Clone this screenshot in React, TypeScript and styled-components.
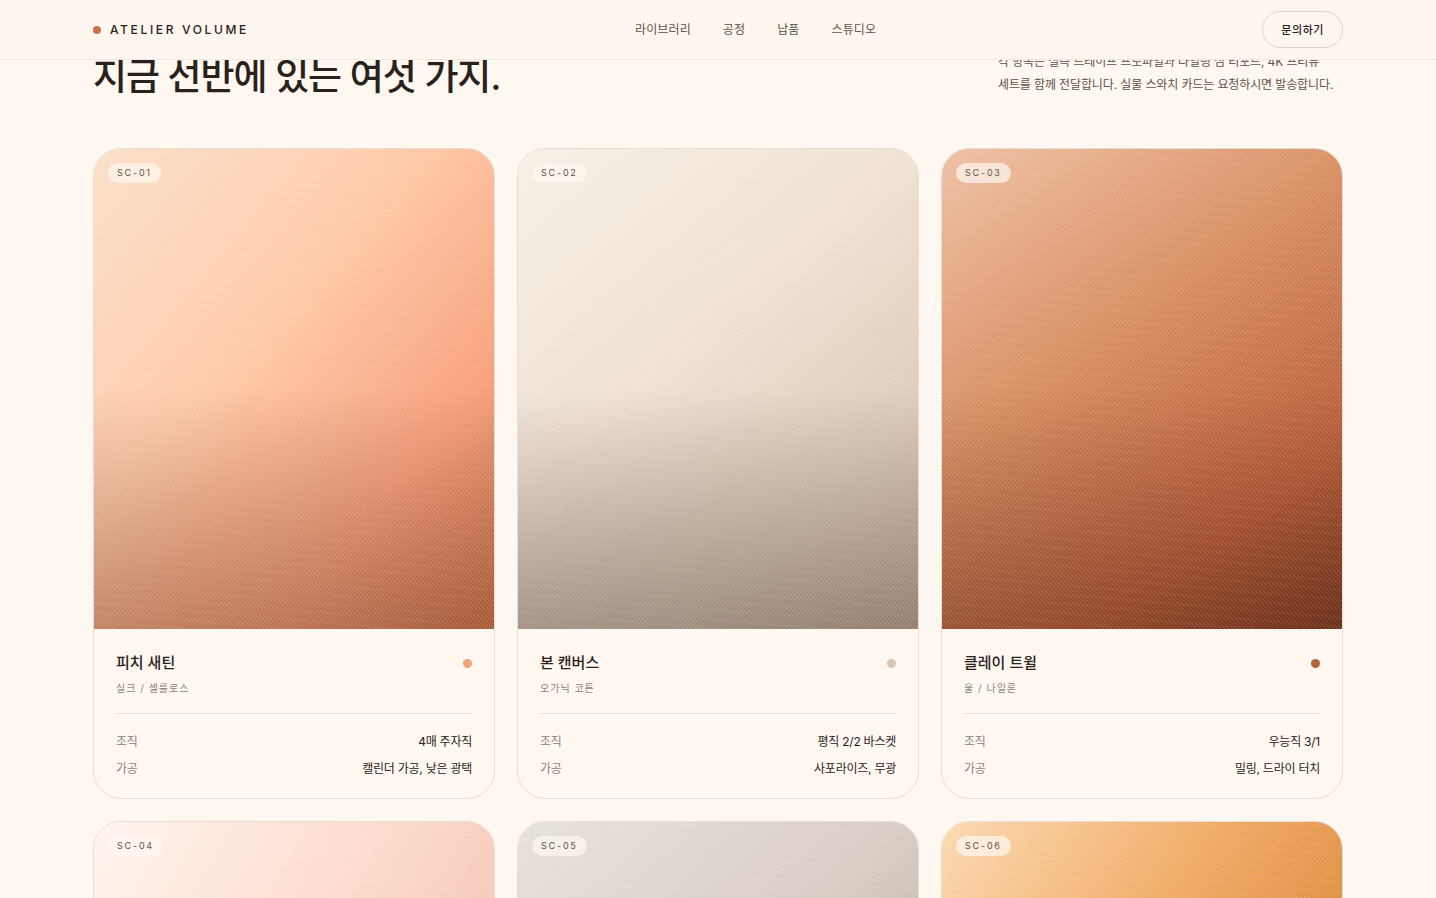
import React from "react";
import styled, { createGlobalStyle } from "styled-components";

const ink = "#2a211c";
const muted = "#8c837b";
const line = "#e6ddd4";

const GlobalStyle = createGlobalStyle`
  *, *::before, *::after { box-sizing: border-box; }
  body {
    margin: 0;
    background: #fef8f1;
    color: ${ink};
    font-family: Inter, "Noto Sans CJK KR", sans-serif;
    font-size: 12px;
    line-height: 20px;
    letter-spacing: -0.01em;
    word-break: keep-all;
  }
  h2, h3, p, dl, dd { margin: 0; }
`;

const Container = styled.div`
  width: 100%;
  max-width: 1298px;
  margin: 0 auto;
  padding: 0 24px;
`;

const Header = styled.header`
  position: sticky;
  top: 0;
  z-index: 10;
  background: #fdf7f0;
  border-bottom: 1px solid #f0e8e0;
`;

const HeaderInner = styled(Container)`
  display: flex;
  justify-content: space-between;
  align-items: center;
  height: 59px;
`;

const Brand = styled.a`
  display: flex;
  align-items: center;
  gap: 9px;
  color: ${ink};
  font-size: 12px;
  font-weight: 500;
  letter-spacing: 0.22em;
  text-decoration: none;
`;

const Dot = styled.span<{ $color: string; $size: number }>`
  flex: none;
  width: ${(p) => p.$size}px;
  height: ${(p) => p.$size}px;
  border-radius: 50%;
  background: ${(p) => p.$color};
`;

const Nav = styled.nav`
  display: flex;
  gap: 32px;
`;

const NavLink = styled.a`
  color: #5d534b;
  font-size: 12px;
  letter-spacing: 0.01em;
  text-decoration: none;
`;

const ContactButton = styled.button`
  height: 37px;
  padding: 0 18px;
  border: 1px solid #ddd5cd;
  border-radius: 19px;
  background: transparent;
  color: ${ink};
  font: 500 11px/16px Inter, "Noto Sans CJK KR", sans-serif;
  letter-spacing: 0.05em;
`;

const Library = styled.main`
  /* The intro slides under the sticky header. */
  margin-top: -10px;
`;

const Intro = styled.div`
  display: flex;
  justify-content: space-between;
  align-items: flex-end;
  gap: 48px;
  margin-bottom: 52px;
`;

const Title = styled.h2`
  font-size: 37px;
  line-height: 39px;
  font-weight: 500;
  letter-spacing: -0.03em;
`;

const Lead = styled.p`
  max-width: 345px;
  color: #5d534b;
  line-height: 23px;
`;

const Grid = styled.div`
  display: grid;
  grid-template-columns: repeat(3, minmax(0, 1fr));
  gap: 22px;
`;

const Card = styled.article`
  overflow: hidden;
  border: 1px solid ${line};
  border-radius: 28px;
`;

const Swatch = styled.div<{ $fill: string; $shade: string }>`
  position: relative;
  aspect-ratio: 5 / 6;
  background:
    repeating-linear-gradient(48deg, rgba(255, 255, 255, 0.12) 0 1px, transparent 1px 3px),
    linear-gradient(180deg, transparent 50%, ${(p) => p.$shade} 100%),
    ${(p) => p.$fill};
`;

const Code = styled.span`
  position: absolute;
  top: 14px;
  left: 14px;
  padding: 2px 9px;
  border-radius: 10px;
  background: rgba(254, 248, 241, 0.7);
  color: #5d534b;
  font-size: 9px;
  line-height: 16px;
  letter-spacing: 0.2em;
`;

const Body = styled.div`
  padding: 23px 22px 19px;
`;

const CardHead = styled.div`
  display: flex;
  justify-content: space-between;
  align-items: baseline;
`;

const Name = styled.h3`
  font-size: 15px;
  line-height: 22px;
  font-weight: 500;
  letter-spacing: 0;
`;

const Fibre = styled.p`
  margin-top: 7px;
  padding-bottom: 18px;
  border-bottom: 1px solid ${line};
  color: ${muted};
  font-size: 10px;
  line-height: 14px;
  letter-spacing: 0.1em;
`;

const Specs = styled.dl`
  display: grid;
  gap: 7px;
  padding-top: 18px;
  letter-spacing: -0.02em;
`;

const Spec = styled.div`
  display: flex;
  justify-content: space-between;
  dt { color: ${muted}; }
`;

type Material = {
  code: string;
  fill: string;
  shade: string;
  detail?: { name: string; fibre: string; dot: string; weave: string; finish: string };
};

const materials: Material[] = [
  {
    code: "SC-01",
    fill: "linear-gradient(130deg, #fadfc8 0%, #ffcbaa 38%, #f7a07a 73%, #cf724a 100%)",
    shade: "rgba(110, 55, 30, 0.42)",
    detail: { name: "피치 새틴", fibre: "실크 / 셀룰로스", dot: "#f4a27a", weave: "4매 주자직", finish: "캘린더 가공, 낮은 광택" },
  },
  {
    code: "SC-02",
    fill: "linear-gradient(140deg, #f7f0e7 0%, #efe2d3 40%, #dccab7 75%, #c9b29e 100%)",
    shade: "rgba(75, 55, 45, 0.42)",
    detail: { name: "본 캔버스", fibre: "오가닉 코튼", dot: "#d9c7b5", weave: "평직 2/2 바스켓", finish: "사포라이즈, 무광" },
  },
  {
    code: "SC-03",
    fill: "linear-gradient(145deg, #efc0a4 0%, #d88d60 40%, #b65b36 77%, #7c3820 100%)",
    shade: "rgba(70, 25, 8, 0.32)",
    detail: { name: "클레이 트윌", fibre: "울 / 나일론", dot: "#b7623c", weave: "우능직 3/1", finish: "밀링, 드라이 터치" },
  },
  {
    code: "SC-04",
    fill: "linear-gradient(120deg, #fff3ee 0%, #fde0d2 35%, #f6c6b6 70%, #e0a090 100%)",
    shade: "rgba(110, 60, 50, 0.4)",
  },
  {
    code: "SC-05",
    fill: "linear-gradient(140deg, #e7e1dc 0%, #d8ccc5 40%, #b8a89c 75%, #8f7f74 100%)",
    shade: "rgba(60, 45, 35, 0.4)",
  },
  {
    code: "SC-06",
    fill: "linear-gradient(125deg, #fbd9b0 0%, #f0a760 40%, #d98838 70%, #a85c20 100%)",
    shade: "rgba(80, 40, 10, 0.4)",
  },
];

export default function App() {
  return (
    <>
      <GlobalStyle />
      <Header>
        <HeaderInner>
          <Brand href="#">
            <Dot $color="#c8704c" $size={8} />
            ATELIER VOLUME
          </Brand>
          <Nav>
            {["라이브러리", "공정", "납품", "스튜디오"].map((label) => (
              <NavLink key={label} href="#">{label}</NavLink>
            ))}
          </Nav>
          <ContactButton type="button">문의하기</ContactButton>
        </HeaderInner>
      </Header>
      <Library>
        <Container>
          <Intro>
            <Title>지금 선반에 있는 여섯 가지.</Title>
            <Lead>각 항목은 실측 드레이프 프로파일과 타일링 심 리포트, 4K 프리뷰 세트를 함께 전달합니다. 실물 스와치 카드는 요청하시면 발송합니다.</Lead>
          </Intro>
          <Grid>
            {materials.map(({ code, fill, shade, detail }) => (
              <Card key={code}>
                <Swatch $fill={fill} $shade={shade}>
                  <Code>{code}</Code>
                </Swatch>
                {detail && (
                  <Body>
                    <CardHead>
                      <Name>{detail.name}</Name>
                      <Dot $color={detail.dot} $size={9} />
                    </CardHead>
                    <Fibre>{detail.fibre}</Fibre>
                    <Specs>
                      <Spec><dt>조직</dt><dd>{detail.weave}</dd></Spec>
                      <Spec><dt>가공</dt><dd>{detail.finish}</dd></Spec>
                    </Specs>
                  </Body>
                )}
              </Card>
            ))}
          </Grid>
        </Container>
      </Library>
    </>
  );
}
